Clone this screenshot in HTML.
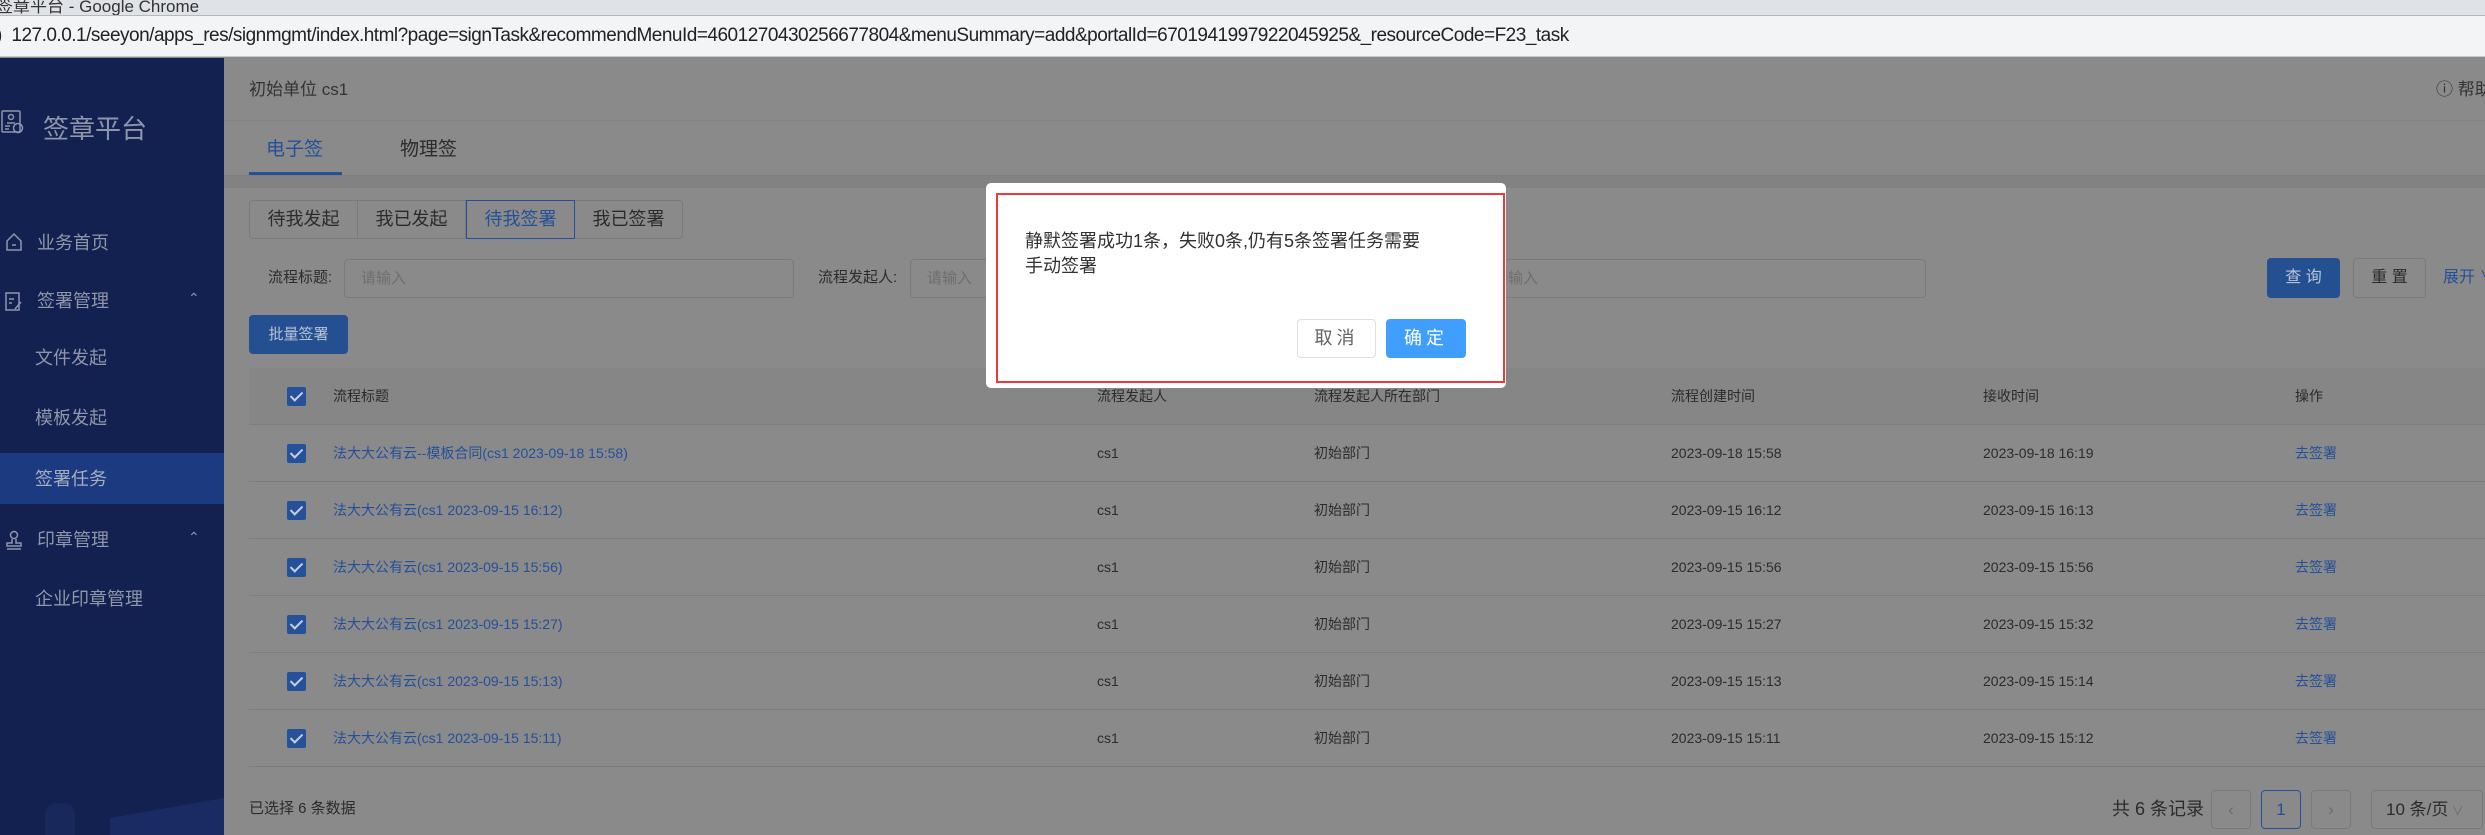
<!DOCTYPE html>
<html style="width:2485px;height:835px;overflow:hidden;background:#8a8a8a"><head><meta charset="utf-8"><style>
*{margin:0;padding:0;box-sizing:border-box}
body{width:2485px;height:835px;position:relative;overflow:hidden;background:#8a8a8a;font-family:"Liberation Sans","Noto Sans CJK SC",sans-serif;color:#2b2b2b}
.a{position:absolute;white-space:nowrap}
.side{position:absolute;left:0;top:58px;width:224px;height:777px;background:#12214f;overflow:hidden}
.st{position:absolute;color:#8f95aa;font-size:18px;line-height:20px}
.seg{position:absolute;top:200px;height:39px;width:109px;border:1px solid #7a7a7a;font-size:18px;line-height:37px;text-align:center;color:#2b2b2b}
.inp{position:absolute;top:259px;height:39px;border:1px solid #7a7a7a;border-radius:4px;font-size:15px;line-height:37px;padding-left:16px;color:#6e6e6e}
.lbl{position:absolute;top:268px;font-size:15px;line-height:20px;color:#2b2b2b}
.row{position:absolute;left:249px;width:2236px;height:57px;border-bottom:1px solid #7d7d7d}
.cb{position:absolute;left:38px;top:19px;width:19px;height:19px;background:#24519a;border-radius:2px}
.cb:after{content:"";position:absolute;left:6px;top:2px;width:5px;height:10px;border:solid #c8cde0;border-width:0 2px 2px 0;transform:rotate(45deg)}
.c{position:absolute;top:18px;font-size:14px;line-height:20px;color:#2b2b2b}
.lk{color:#24509a}
.pg{position:absolute;top:790px;height:39px;border:1px solid #7a7a7a;border-radius:4px;text-align:center;line-height:37px;font-size:17px;color:#6b6b6b}
</style></head><body>
<div class="a" style="left:0;top:0;width:2485px;height:15px;background:#dfe2e6;overflow:hidden"><span style="position:absolute;left:-4px;top:-8px;font-size:17px;color:#333">签章平台 - Google Chrome</span></div>
<div class="a" style="left:0;top:15px;width:2485px;height:42px;background:#f3f4f6;border-top:1px solid #b8b8b8;border-bottom:1px solid #c8c8c8"></div>
<div class="a" style="left:-4px;top:25px;font-size:19px;line-height:22px;color:#222;letter-spacing:-0.5px">)&nbsp; 127.0.0.1/seeyon/apps_res/signmgmt/index.html?page=signTask&amp;recommendMenuId=4601270430256677804&amp;menuSummary=add&amp;portalId=6701941997922045925&amp;_resourceCode=F23_task</div>

<div class="side">
<svg class="a" style="left:1px;top:52px" width="24" height="24" viewBox="0 0 24 24" fill="none" stroke="#8f95aa" stroke-width="1.5"><rect x="1" y="1" width="18" height="21" rx="1"/><circle cx="10" cy="7" r="2.5"/><path d="M6 13h8M4 16h5M4 19h4"/><circle cx="17" cy="18" r="4.5"/></svg>
<div class="st" style="left:43px;top:56px;font-size:26px;line-height:30px">签章平台</div>
<svg class="a" style="left:5px;top:174px" width="18" height="20" viewBox="0 0 18 20" fill="none" stroke="#8f95aa" stroke-width="1.5"><path d="M2 9L9 2l7 7v9H2z"/><path d="M7 13h4"/></svg>
<div class="st" style="left:37px;top:175px">业务首页</div>
<svg class="a" style="left:5px;top:234px" width="18" height="20" viewBox="0 0 18 20" fill="none" stroke="#8f95aa" stroke-width="1.5"><rect x="1" y="1" width="13" height="17"/><path d="M4 7h5M4 11h3M10 17l6-7"/></svg>
<div class="st" style="left:37px;top:233px">签署管理</div>
<div class="st" style="left:188px;top:230px;font-size:14px">&#8963;</div>
<div class="st" style="left:35px;top:290px">文件发起</div>
<div class="st" style="left:35px;top:350px">模板发起</div>
<div class="a" style="left:0;top:395px;width:224px;height:51px;background:#1c3a80"></div>
<div class="st" style="left:35px;top:411px;color:#a7adc0">签署任务</div>
<svg class="a" style="left:5px;top:472px" width="18" height="20" viewBox="0 0 18 20" fill="none" stroke="#8f95aa" stroke-width="1.5"><circle cx="9" cy="5" r="3.5"/><path d="M7 9v4H2v3h14v-3h-5V9M2 19h14"/></svg>
<div class="st" style="left:37px;top:472px">印章管理</div>
<div class="st" style="left:188px;top:469px;font-size:14px">&#8963;</div>
<div class="st" style="left:35px;top:531px">企业印章管理</div>
<div class="a" style="left:45px;top:745px;width:30px;height:40px;background:#19285a;border-radius:12px 12px 0 0"></div>
<div class="a" style="left:110px;top:750px;width:114px;height:40px;background:#1a2b64;transform:skewY(-10deg)"></div>
</div>

<div class="a" style="left:249px;top:80px;font-size:17px;line-height:20px;color:#333">初始单位 cs1</div>
<div class="a" style="left:2436px;top:80px;font-size:17px;line-height:20px;color:#333">&#9432; 帮助</div>
<div class="a" style="left:224px;top:120px;width:2261px;height:1px;background:#838383"></div>
<div class="a" style="left:266px;top:139px;font-size:19px;line-height:22px;color:#24509a">电子签</div>
<div class="a" style="left:400px;top:139px;font-size:19px;line-height:22px;color:#2b2b2b">物理签</div>
<div class="a" style="left:249px;top:172px;width:93px;height:4px;background:#24509a"></div>
<div class="a" style="left:224px;top:175px;width:2261px;height:13px;background:#828282;border-top:1px solid #7d7d7d"></div>

<div class="seg" style="left:249px;border-radius:4px 0 0 4px">待我发起</div>
<div class="seg" style="left:357px">我已发起</div>
<div class="seg" style="left:466px;border-color:#24509a;color:#24509a;z-index:1">待我签署</div>
<div class="seg" style="left:574px;border-radius:0 4px 4px 0">我已签署</div>

<div class="lbl" style="left:268px">流程标题:</div>
<div class="inp" style="left:344px;width:450px">请输入</div>
<div class="lbl" style="left:818px">流程发起人:</div>
<div class="inp" style="left:910px;width:460px">请输入</div>
<div class="inp" style="left:1476px;width:450px">请输入</div>
<div class="a" style="left:2267px;top:258px;width:73px;height:40px;background:#245091;border-radius:4px;color:#b8c3d8;font-size:16px;line-height:40px;text-align:center">查 询</div>
<div class="a" style="left:2353px;top:258px;width:73px;height:40px;border:1px solid #7a7a7a;border-radius:4px;color:#2b2b2b;font-size:16px;line-height:38px;text-align:center">重 置</div>
<div class="a" style="left:2443px;top:268px;font-size:16px;line-height:20px;color:#24509a">展开 ∨</div>
<div class="a" style="left:249px;top:315px;width:99px;height:39px;background:#245091;border-radius:4px;color:#b8c3d8;font-size:15px;line-height:39px;text-align:center">批量签署</div>

<div class="row" style="top:368px;background:#868686">
<div class="cb"></div><div class="c" style="left:84px">流程标题</div><div class="c" style="left:848px">流程发起人</div><div class="c" style="left:1065px">流程发起人所在部门</div><div class="c" style="left:1422px">流程创建时间</div><div class="c" style="left:1734px">接收时间</div><div class="c" style="left:2046px">操作</div></div>
<div class="row" style="top:425px"><div class="cb"></div><div class="c lk" style="left:84px">法大大公有云--模板合同(cs1 2023-09-18 15:58)</div><div class="c" style="left:848px">cs1</div><div class="c" style="left:1065px">初始部门</div><div class="c" style="left:1422px">2023-09-18 15:58</div><div class="c" style="left:1734px">2023-09-18 16:19</div><div class="c lk" style="left:2046px">去签署</div></div>
<div class="row" style="top:482px"><div class="cb"></div><div class="c lk" style="left:84px">法大大公有云(cs1 2023-09-15 16:12)</div><div class="c" style="left:848px">cs1</div><div class="c" style="left:1065px">初始部门</div><div class="c" style="left:1422px">2023-09-15 16:12</div><div class="c" style="left:1734px">2023-09-15 16:13</div><div class="c lk" style="left:2046px">去签署</div></div>
<div class="row" style="top:539px"><div class="cb"></div><div class="c lk" style="left:84px">法大大公有云(cs1 2023-09-15 15:56)</div><div class="c" style="left:848px">cs1</div><div class="c" style="left:1065px">初始部门</div><div class="c" style="left:1422px">2023-09-15 15:56</div><div class="c" style="left:1734px">2023-09-15 15:56</div><div class="c lk" style="left:2046px">去签署</div></div>
<div class="row" style="top:596px"><div class="cb"></div><div class="c lk" style="left:84px">法大大公有云(cs1 2023-09-15 15:27)</div><div class="c" style="left:848px">cs1</div><div class="c" style="left:1065px">初始部门</div><div class="c" style="left:1422px">2023-09-15 15:27</div><div class="c" style="left:1734px">2023-09-15 15:32</div><div class="c lk" style="left:2046px">去签署</div></div>
<div class="row" style="top:653px"><div class="cb"></div><div class="c lk" style="left:84px">法大大公有云(cs1 2023-09-15 15:13)</div><div class="c" style="left:848px">cs1</div><div class="c" style="left:1065px">初始部门</div><div class="c" style="left:1422px">2023-09-15 15:13</div><div class="c" style="left:1734px">2023-09-15 15:14</div><div class="c lk" style="left:2046px">去签署</div></div>
<div class="row" style="top:710px"><div class="cb"></div><div class="c lk" style="left:84px">法大大公有云(cs1 2023-09-15 15:11)</div><div class="c" style="left:848px">cs1</div><div class="c" style="left:1065px">初始部门</div><div class="c" style="left:1422px">2023-09-15 15:11</div><div class="c" style="left:1734px">2023-09-15 15:12</div><div class="c lk" style="left:2046px">去签署</div></div>

<div class="a" style="left:249px;top:799px;font-size:15px;line-height:20px;color:#2b2b2b">已选择 6 条数据</div>
<div class="a" style="left:2112px;top:798px;font-size:18px;line-height:22px;color:#2b2b2b">共 6 条记录</div>
<div class="pg" style="left:2211px;width:40px">&lsaquo;</div>
<div class="pg" style="left:2261px;width:40px;border-color:#24509a;color:#24509a">1</div>
<div class="pg" style="left:2311px;width:40px">&rsaquo;</div>
<div class="pg" style="left:2371px;width:112px;color:#2b2b2b;text-align:left;padding-left:14px">10 条/页<span style="font-size:12px;color:#6b6b6b"> ∨</span></div>

<div class="a" style="left:986px;top:183px;width:520px;height:205px;background:#fff;border-radius:5px"></div>
<div class="a" style="left:996px;top:193px;width:509px;height:190px;border:2px solid #f0393c"></div>
<div class="a" style="left:1025px;top:229px;font-size:18px;line-height:25px;color:#303133">静默签署成功1条，失败0条,仍有5条签署任务需要<br>手动签署</div>
<div class="a" style="left:1297px;top:319px;width:79px;height:39px;border:1px solid #dcdfe6;border-radius:4px;font-size:18px;line-height:37px;text-align:center;color:#606266;letter-spacing:4px">取消</div>
<div class="a" style="left:1386px;top:319px;width:80px;height:39px;background:#409eff;border-radius:4px;font-size:18px;line-height:39px;text-align:center;color:#fff;letter-spacing:4px">确定</div>
</body></html>
